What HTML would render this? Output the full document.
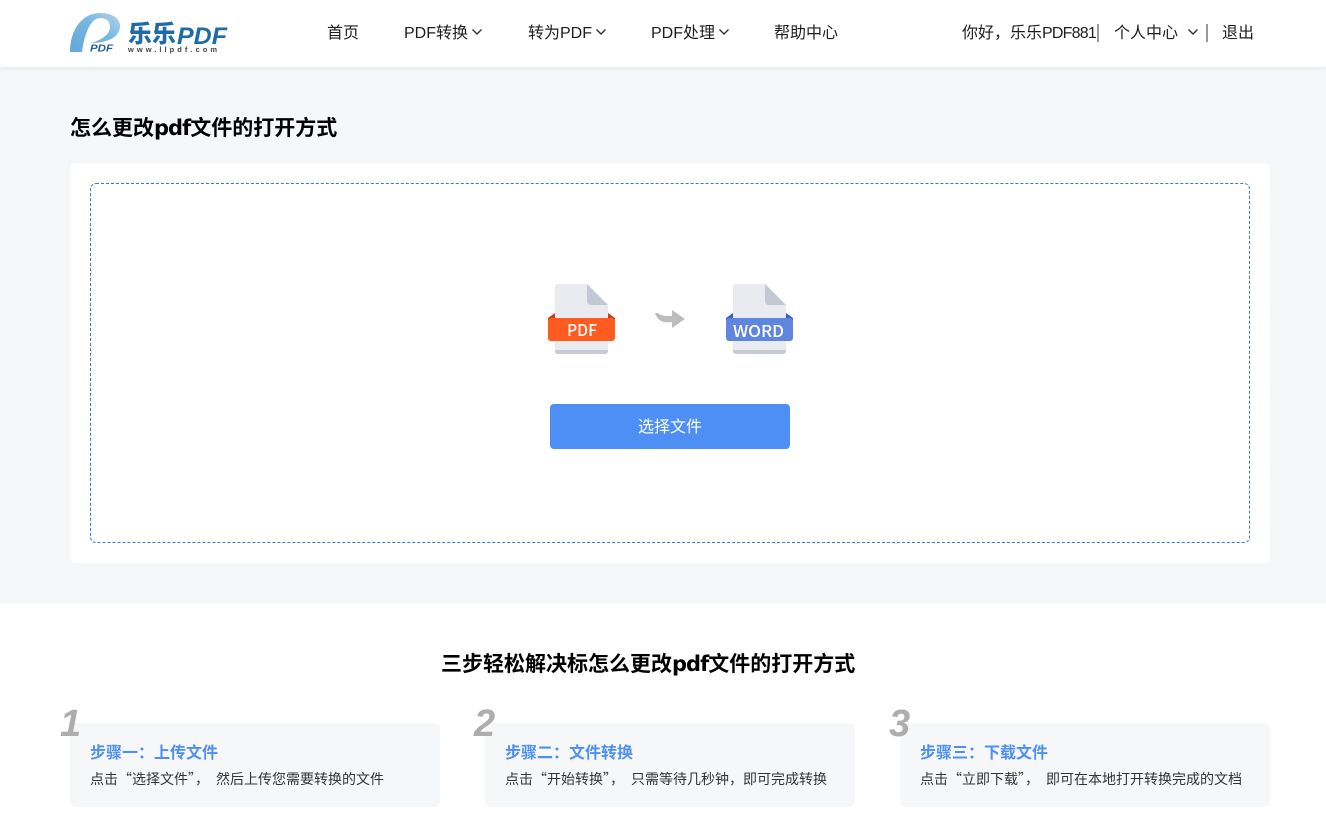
<!DOCTYPE html>
<html lang="zh-CN">
<head>
<meta charset="utf-8">
<title>怎么更改pdf文件的打开方式</title>
<style>
html,body{margin:0;padding:0}
body{width:1326px;height:833px;position:relative;overflow:hidden;background:#fff;font-family:"Liberation Sans","Noto Sans CJK SC",sans-serif;color:#222}
.a{position:absolute;white-space:nowrap}
.nav{font-size:16px;line-height:24px;top:22px;color:#1d1d1f}
.nav i{font-style:normal;letter-spacing:-.8px}
.chev{position:absolute;top:28px;width:12px;height:8px}
.card{position:absolute;top:723px;width:370px;height:84px;background:#f6f7f9;border-radius:6px}
.h{position:absolute;left:20px;top:19px;font-size:16px;line-height:24px;font-weight:700;color:#4e8ff5;white-space:nowrap}
.p{position:absolute;left:20px;top:46px;font-size:14px;line-height:20px;color:#333;white-space:nowrap;word-spacing:3.9px;font-family:"Noto Sans CJK SC",sans-serif}
.n{position:absolute;top:702px;font:italic 700 38px/44px "Liberation Sans",sans-serif;color:#adadad}
.t{font-size:21px;font-weight:700;line-height:30px;color:#000;font-family:"DejaVu Sans","Noto Sans CJK SC",sans-serif}
.t i{font-style:normal;letter-spacing:-1px}
</style>
</head>
<body>
<div class="a" style="left:0;top:0;width:1326px;height:67px;background:#fff;box-shadow:0 1px 6px rgba(0,0,0,.08);z-index:2"></div>
<div class="a" style="left:0;top:67px;width:1326px;height:536px;background:#f6f7f9"></div>

<div style="position:absolute;left:0;top:0;z-index:3;width:1326px;height:67px">
<svg class="a" style="left:60px;top:5px" width="180" height="55" viewBox="60 5 180 55">
<defs><linearGradient id="g" x1="0" y1="1" x2="1" y2="0"><stop offset="0" stop-color="#62a8d8"/><stop offset=".6" stop-color="#7ab7df"/><stop offset="1" stop-color="#b4d6ec"/></linearGradient></defs>
<path fill="url(#g)" d="M70 52C70 30 82 13 100 13C112 13 120 18 120 26C120 37 108 43 90 43C100 41 110 35 110 27C110 21 106 18 100 18C92 18 85 30 82 52Z"/>
<text x="90" y="51.5" font-family="Liberation Sans" font-weight="700" font-style="italic" font-size="10" fill="#1f6098" textLength="23" lengthAdjust="spacingAndGlyphs">PDF</text>
<text x="128" y="42" font-family="Noto Sans CJK SC" font-weight="900" font-size="24" fill="#1f6ba5" textLength="48" lengthAdjust="spacingAndGlyphs">乐乐</text>
<text x="177" y="44" font-family="Liberation Sans" font-weight="700" font-style="italic" font-size="24" fill="#1f6ba5" textLength="50" lengthAdjust="spacingAndGlyphs">PDF</text>
<text x="128" y="52" font-family="Liberation Sans" font-weight="700" font-size="7.5" fill="#444" textLength="89">www.llpdf.com</text>
</svg>

<div class="a nav" style="left:327px">首页</div>
<div class="a nav" style="left:404px">PDF转换</div>
<svg class="chev" style="left:471px" viewBox="0 0 12 8"><path d="M1.5 1.5L6 6L10.5 1.5" fill="none" stroke="#333" stroke-width="1.4"/></svg>
<div class="a nav" style="left:528px">转为PDF</div>
<svg class="chev" style="left:595px" viewBox="0 0 12 8"><path d="M1.5 1.5L6 6L10.5 1.5" fill="none" stroke="#333" stroke-width="1.4"/></svg>
<div class="a nav" style="left:651px">PDF处理</div>
<svg class="chev" style="left:718px" viewBox="0 0 12 8"><path d="M1.5 1.5L6 6L10.5 1.5" fill="none" stroke="#333" stroke-width="1.4"/></svg>
<div class="a nav" style="left:774px">帮助中心</div>

<div class="a nav" style="left:962px">你好，乐乐<i>PDF881</i></div>
<div class="a" style="left:1097px;top:24px;width:2px;height:18px;background:#999"></div>
<div class="a nav" style="left:1114px">个人中心</div>
<svg class="chev" style="left:1187px" viewBox="0 0 12 8"><path d="M1.5 1.5L6 6L10.5 1.5" fill="none" stroke="#333" stroke-width="1.4"/></svg>
<div class="a" style="left:1206px;top:24px;width:2px;height:18px;background:#999"></div>
<div class="a nav" style="left:1222px">退出</div>
</div>

<div class="a t" style="left:70px;top:113px">怎么更改<i>pdf</i>文件的打开方式</div>

<div class="a" style="left:70px;top:163px;width:1200px;height:400px;background:#fff;border-radius:6px"></div>
<div class="a" style="left:90px;top:183px;width:1158px;height:358px;border:1px dashed #2f78ee;border-radius:6px"></div>

<svg class="a" style="left:540px;top:275px" width="260" height="90" viewBox="540 275 260 90">
<g>
<path d="M548 318L555 313V320H548Z" fill="#c93f12"/><path d="M615 318L608 313V320H615Z" fill="#c93f12"/>
<path d="M558 284H587L608 305V351a3 3 0 0 1-3 3H558a3 3 0 0 1-3-3V287a3 3 0 0 1 3-3Z" fill="#e9ebf0"/>
<path d="M587 284L608 305H591a4 4 0 0 1-4-4Z" fill="#c3c9d4"/>
<path d="M555 350H608V351a3 3 0 0 1-3 3H558a3 3 0 0 1-3-3Z" fill="#c5cad5"/>
<rect x="548" y="318" width="67" height="23" rx="3" fill="#ff5a1f"/>
<text x="567" y="336" font-family="Noto Sans CJK SC" font-weight="500" font-size="16" fill="#fff" textLength="30" lengthAdjust="spacingAndGlyphs">PDF</text>
</g>
<path d="M655 313L658 313C661 316 666 316 672 316V310L685 319L672 328V322C664 323 658 322 655 313Z" fill="#bdbdbd"/>
<g>
<path d="M726 318L733 313V320H726Z" fill="#3a5fc0"/><path d="M793 318L786 313V320H793Z" fill="#3a5fc0"/>
<path d="M736 284H765L786 305V351a3 3 0 0 1-3 3H736a3 3 0 0 1-3-3V287a3 3 0 0 1 3-3Z" fill="#e9ebf0"/>
<path d="M765 284L786 305H769a4 4 0 0 1-4-4Z" fill="#c3c9d4"/>
<path d="M733 350H786V351a3 3 0 0 1-3 3H736a3 3 0 0 1-3-3Z" fill="#c5cad5"/>
<rect x="726" y="318" width="67" height="23" rx="3" fill="#5f86de"/>
<text x="733" y="337" font-family="Noto Sans CJK SC" font-weight="500" font-size="16" fill="#fff" textLength="51" lengthAdjust="spacingAndGlyphs">WORD</text>
</g>
</svg>

<div class="a" style="left:550px;top:404px;width:240px;height:45px;background:#4e8ff5;border-radius:4px;color:#fff;font-size:16px;line-height:47px;text-align:center">选择文件</div>

<div class="a t" style="left:441px;top:649px">三步轻松解决标怎么更改<i>pdf</i>文件的打开方式</div>

<div class="card" style="left:70px"><div class="h">步骤一：上传文件</div><div class="p">点击“选择文件”， 然后上传您需要转换的文件</div></div>
<div class="card" style="left:485px"><div class="h">步骤二：文件转换</div><div class="p">点击“开始转换”， 只需等待几秒钟，即可完成转换</div></div>
<div class="card" style="left:900px"><div class="h">步骤三：下载文件</div><div class="p">点击“立即下载”， 即可在本地打开转换完成的文档</div></div>
<div class="n" style="left:60px">1</div>
<div class="n" style="left:474px">2</div>
<div class="n" style="left:889px">3</div>
</body>
</html>
